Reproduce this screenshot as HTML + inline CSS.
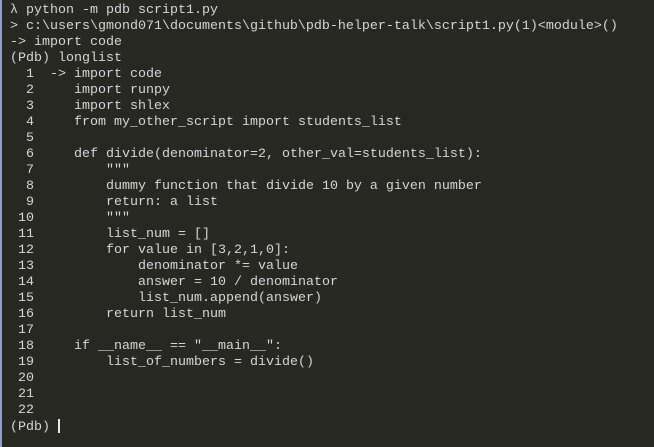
<!DOCTYPE html>
<html><head><meta charset="utf-8"><style>
html,body{margin:0;padding:0;}
body{width:654px;height:447px;background:#272822;overflow:hidden;position:relative;}
.strip{position:absolute;left:0;top:0;width:2px;height:447px;background:#8fa3c0;}
pre{margin:0;position:absolute;left:10px;top:3px;font-family:"Liberation Mono",monospace;font-size:13.33px;line-height:16px;color:#d6d6d6;tab-size:8;-moz-tab-size:8;white-space:pre;}
.cur{display:inline-block;width:2px;height:14px;background:#e8e8e8;vertical-align:-3px;}
</style></head><body>
<div class="strip"></div>
<pre>λ python -m pdb script1.py
&gt; c:\users\gmond071\documents\github\pdb-helper-talk\script1.py(1)&lt;module&gt;()
-&gt; import code
(Pdb) longlist
  1  -&gt;	import code
  2  	import runpy
  3  	import shlex
  4  	from my_other_script import students_list
  5  	
  6  	def divide(denominator=2, other_val=students_list):
  7  	    """
  8  	    dummy function that divide 10 by a given number
  9  	    return: a list
 10  	    """
 11  	    list_num = []
 12  	    for value in [3,2,1,0]:
 13  	        denominator *= value
 14  	        answer = 10 / denominator
 15  	        list_num.append(answer)
 16  	    return list_num
 17  	
 18  	if __name__ == "__main__":
 19  	    list_of_numbers = divide()
 20  	
 21  	
 22  	
(Pdb) <span class="cur"></span></pre>
</body></html>
